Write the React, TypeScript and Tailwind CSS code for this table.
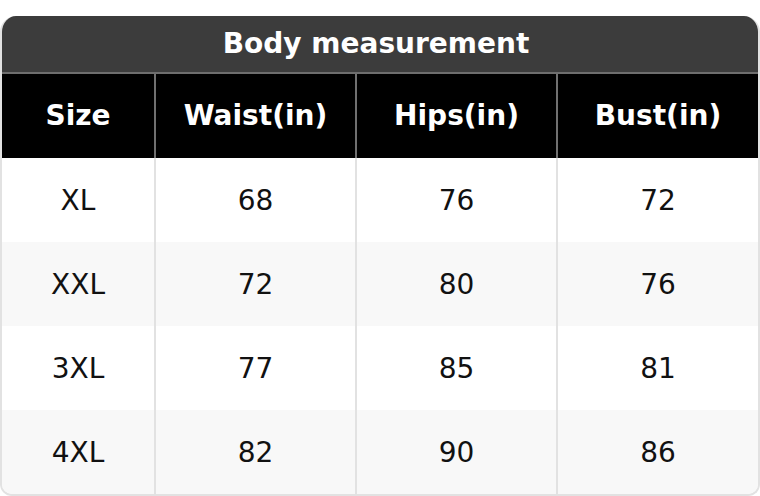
import React from "react";

const rows = [
  ["XL", "68", "76", "72"],
  ["XXL", "72", "80", "76"],
  ["3XL", "77", "85", "81"],
  ["4XL", "82", "90", "86"],
];
const headers = ["Size", "Waist(in)", "Hips(in)", "Bust(in)"];

export default function App() {
  return (
    <div
      className="w-[760px] h-[496px] bg-white pt-4"
      style={{ fontFamily: '"DejaVu Sans", sans-serif' }}
    >
      <div className="w-[760px] rounded-t-[16px] rounded-b-[12px] overflow-hidden border-2 border-t-0 border-[#e2e2e2] bg-white">
        <div className="h-[56px] bg-[#3c3c3c] flex items-center justify-center pr-[8px] text-white font-bold text-[28px]">
          Body measurement
        </div>
        <div className="h-[2px] bg-[#6e6e6e]" />
        <div className="grid grid-cols-[154px_201px_201px_1fr]">
          {headers.map((h, i) => (
            <div
              key={h}
              className={`h-[84px] bg-black text-white font-bold text-[28px] flex items-center justify-center ${
                i < 3 ? "border-r-2 border-[#707070]" : ""
              }`}
            >
              {h}
            </div>
          ))}
          {rows.map((r, ri) =>
            r.map((c, ci) => (
              <div
                key={`${ri}-${ci}`}
                className={`h-[84px] pt-[2px] text-[28px] text-[#111] flex items-center justify-center ${
                  ri % 2 === 1 ? "bg-[#f8f8f8]" : "bg-white"
                } ${ci < 3 ? "border-r-2 border-[#e2e2e2]" : ""}`}
              >
                {c}
              </div>
            ))
          )}
        </div>
      </div>
    </div>
  );
}
